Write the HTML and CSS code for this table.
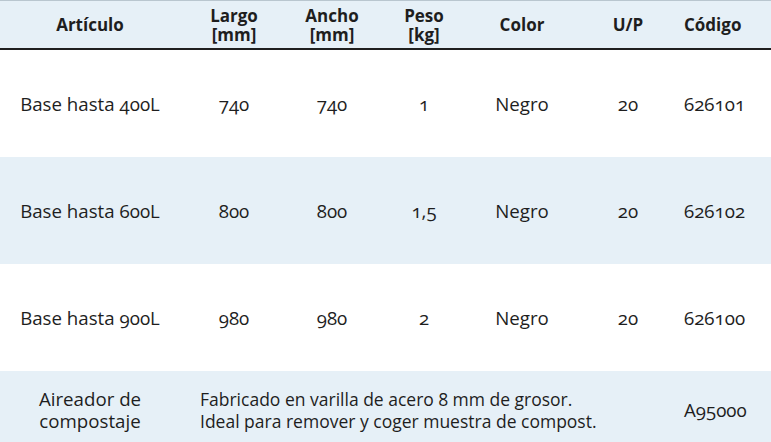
FILE: index.html
```html
<!DOCTYPE html>
<html lang="es"><head><meta charset="utf-8"><link rel="stylesheet" href="styles.css"></head>
<body>
<table class="spec">
  <colgroup>
    <col class="c1"><col class="c2"><col class="c3"><col class="c4"><col class="c5"><col class="c6"><col class="c7">
  </colgroup>
  <thead>
    <tr>
      <th>Artículo</th>
      <th>Largo<br>[mm]</th>
      <th>Ancho<br>[mm]</th>
      <th>Peso<br>[kg]</th>
      <th>Color</th>
      <th>U/P</th>
      <th class="last">Código</th>
    </tr>
  </thead>
  <tbody>
    <tr class="row">
      <td>Base hasta 400L</td><td>740</td><td>740</td><td>1</td><td>Negro</td><td>20</td><td class="last">626101</td>
    </tr>
    <tr class="row alt">
      <td>Base hasta 600L</td><td>800</td><td>800</td><td>1,5</td><td>Negro</td><td>20</td><td class="last">626102</td>
    </tr>
    <tr class="row">
      <td>Base hasta 900L</td><td>980</td><td>980</td><td>2</td><td>Negro</td><td>20</td><td class="last">626100</td>
    </tr>
    <tr class="row-desc alt">
      <td>Aireador de<br>compostaje</td>
      <td colspan="5" class="desc">Fabricado en varilla de acero 8 mm de grosor.<br>Ideal para remover y coger muestra de compost.</td>
      <td class="last">A95000</td>
    </tr>
  </tbody>
</table>
</body></html>
```
FILE: styles.css
```css
html, body { margin: 0; padding: 0; background: #ffffff; }
body {
  font-family: "Open Sans", "Noto Sans", sans-serif;
  color: #1e1e1e;
  font-variant-numeric: oldstyle-nums;
  font-feature-settings: "onum" 1;
}
.spec {
  width: 771px;
  border-collapse: collapse;
  table-layout: fixed;
}
.c1 { width: 180px; }
.c2 { width: 108px; }
.c3 { width: 88px; }
.c4 { width: 96px; }
.c5 { width: 100px; }
.c6 { width: 112px; }
.c7 { width: 87px; }
.spec th {
  background: #e6f0f7;
  border-top: 1px solid #b9c6cf;
  border-bottom: 2px solid #1f1f1f;
  height: 47px;
  padding: 0;
  font-size: 17px;
  font-weight: 700;
  line-height: 19px;
  text-align: center;
  vertical-align: middle;
}
.spec td {
  padding: 0;
  font-size: 18.7px;
  line-height: 22px;
  text-align: center;
  vertical-align: middle;
}
.spec .last { padding-right: 30px; }
.row td { height: 107px; }
.alt td { background: #e6f0f7; }
.row-desc td { height: 78px; }
.spec td.desc { text-align: left; padding-left: 20px; font-size: 17.5px; }
```
